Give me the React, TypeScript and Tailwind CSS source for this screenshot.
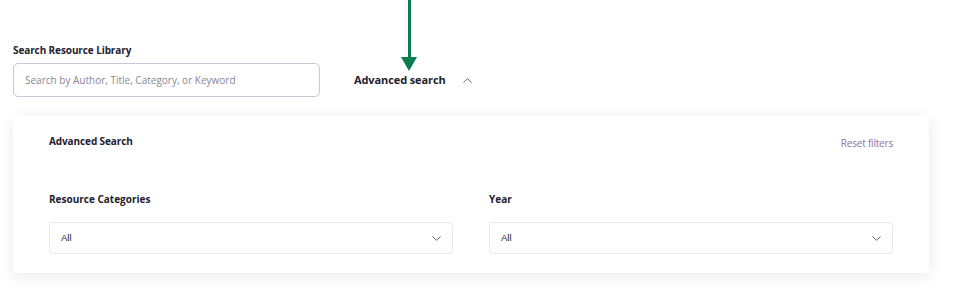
import { ChevronDown, ChevronUp } from "lucide-react";

const font = "font-['Open_Sans',_'Noto_Sans',_sans-serif]";

function SelectBox({ label }: { label: string }) {
  return (
    <label className="flex flex-col">
      <span className="text-[10px] font-bold leading-[14px] text-[#22212e]">{label}</span>
      <div className="mt-[16px] flex h-[32px] items-center justify-between rounded-[4px] border border-[#e6e8ef] bg-white pl-[11px] pr-[8px]">
        <span className="font-['Liberation_Sans',_Arial,_sans-serif] text-[9.5px] text-[#1c1c24]">All</span>
        <ChevronDown className="h-[15px] w-[15px] text-[#5f5a73]" strokeWidth={1.5} />
      </div>
    </label>
  );
}

export default function App() {
  return (
    <div className={`relative h-[297px] w-[960px] bg-white ${font}`}>
      <div className="absolute left-[401px] top-0 flex flex-col items-center">
        <div className="h-[58px] w-[3px] bg-[#0b7d4f]" />
        <svg width="16" height="14" viewBox="0 0 16 14" className="-mt-[1px]">
          <polygon points="0,0 16,0 8,14" fill="#0b7d4f" />
        </svg>
      </div>

      <div className="px-[13px] pt-[43px]">
        <p className="text-[10px] font-bold leading-[14px] tracking-[-0.1px] text-[#22212e]">Search Resource Library</p>
        <div className="mt-[6px] flex items-center">
          <input
            className="h-[34px] w-[307px] rounded-[5px] border border-[#c9c6d6] px-[11px] text-[10px] text-[#333] outline-none placeholder:text-[#8a8894]"
            placeholder="Search by Author, Title, Category, or Keyword"
          />
          <button className="ml-[34px] flex items-center gap-[14px] text-[11px] font-bold tracking-[-0.1px] text-[#22212e]">
            Advanced search
            <ChevronUp className="h-[15px] w-[15px] text-[#5f5a73]" strokeWidth={1.5} />
          </button>
        </div>

        <section className="mt-[19px] w-[916px] bg-white pb-[19px] pl-[36px] pr-[36px] pt-[18px] shadow-[0_3px_14px_rgba(0,0,0,0.09)]">
          <div className="flex items-start justify-between">
            <h2 className="text-[10px] font-bold leading-[14px] tracking-[-0.1px] text-[#22212e]">Advanced Search</h2>
            <button className="mt-[2px] text-[10px] leading-[14px] tracking-[-0.2px] text-[#8d73a6]">Reset filters</button>
          </div>
          <div className="mt-[42px] grid grid-cols-2 gap-[36px]">
            <SelectBox label="Resource Categories" />
            <SelectBox label="Year" />
          </div>
        </section>
      </div>
    </div>
  );
}
